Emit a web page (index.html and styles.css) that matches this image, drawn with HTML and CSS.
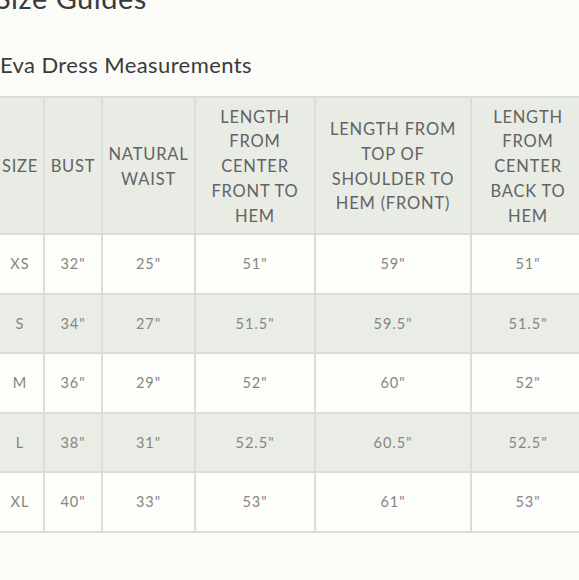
FILE: index.html
```html
<!DOCTYPE html>
<html>
<head>
<meta charset="utf-8">
<link rel="stylesheet" href="styles.css">
</head>
<body>
<div class="page">
  <h1 class="guide-title">Size Guides</h1>
  <h2 class="table-title">Eva Dress Measurements</h2>
  <table class="size-table">
    <colgroup>
      <col class="c1"><col class="c2"><col class="c3"><col class="c4"><col class="c5"><col class="c6">
    </colgroup>
    <thead>
      <tr>
        <th>SIZE</th>
        <th>BUST</th>
        <th>NATURAL WAIST</th>
        <th>LENGTH FROM CENTER FRONT TO HEM</th>
        <th>LENGTH FROM TOP OF SHOULDER TO HEM (FRONT)</th>
        <th>LENGTH FROM CENTER BACK TO HEM</th>
      </tr>
    </thead>
    <tbody>
      <tr><td>XS</td><td>32"</td><td>25"</td><td>51"</td><td>59"</td><td>51"</td></tr>
      <tr class="alt"><td>S</td><td>34"</td><td>27"</td><td>51.5"</td><td>59.5"</td><td>51.5"</td></tr>
      <tr><td>M</td><td>36"</td><td>29"</td><td>52"</td><td>60"</td><td>52"</td></tr>
      <tr class="alt"><td>L</td><td>38"</td><td>31"</td><td>52.5"</td><td>60.5"</td><td>52.5"</td></tr>
      <tr><td>XL</td><td>40"</td><td>33"</td><td>53"</td><td>61"</td><td>53"</td></tr>
    </tbody>
  </table>
</div>
</body>
</html>
```

FILE: styles.css
```css
html, body {
  margin: 0;
  padding: 0;
  background: #fbfbf7;
  overflow: hidden;
}
body {
  width: 579px;
  height: 580px;
  font-family: Lato, "Open Sans", sans-serif;
}
.page {
  margin-left: -5px;
  width: 700px;
}
.guide-title {
  margin: -19px 0 0 0;
  font-size: 29px;
  line-height: 34px;
  font-weight: 400;
  color: #3a3a3a;
  letter-spacing: 0.5px;
}
.table-title {
  margin: 36px 0 0 5px;
  font-size: 22px;
  line-height: 28px;
  font-weight: 400;
  color: #3a3a3a;
  letter-spacing: 0.4px;
}
.size-table {
  margin-top: 17px;
  border-collapse: collapse;
  table-layout: fixed;
  width: 589px;
}
.c1 { width: 48px; }
.c2 { width: 58px; }
.c3 { width: 93px; }
.c4 { width: 120px; }
.c5 { width: 156px; }
.c6 { width: 114px; }
.size-table th,
.size-table td {
  border: 2px solid #dcddd8;
  text-align: center;
  vertical-align: middle;
  padding: 0 4px;
}
.size-table th {
  background: #e8ece4;
  color: #636363;
  font-weight: 400;
  font-size: 16.5px;
  line-height: 24.8px;
  letter-spacing: 0.8px;
  height: 133px;
  padding-top: 2px;
}
.size-table td {
  color: #868686;
  font-size: 14.5px;
  letter-spacing: 1px;
  height: 57.5px;
  background: #fdfdf9;
}
.size-table tr.alt td {
  background: #e9ede5;
}
```
